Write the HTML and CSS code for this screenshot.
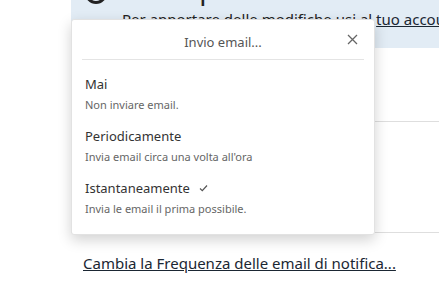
FILE: index.html
```html
<!DOCTYPE html>
<html lang="it">
<head>
  <meta charset="UTF-8" />
  <title>Sottoscrizioni</title>
  <link rel="stylesheet" href="styles.css">
</head>
<body>

  <div class="page">
    <div class="notice">
      <h2 class="notice-title"><span class="notice-icon"></span>Le tue preferenze email</h2>
      <p class="notice-text">Per apportare delle modifiche usi al <a href="#">tuo account</a></p>
    </div>

    <div class="row"></div>
    <div class="row tall"></div>

    <a class="freq-link" href="#">Cambia la Frequenza delle email di notifica...</a>

    <div class="popup">
      <div class="popup-header">
        <span>Invio email...</span>
        <button class="popup-close">
          <svg width="11" height="11" viewBox="0 0 11 11"><path d="M1 1 L10 10 M10 1 L1 10" stroke="#666" stroke-width="1.3" fill="none"/></svg>
        </button>
      </div>
      <ul class="options">
        <li>
          <div class="opt-title">Mai</div>
          <div class="opt-desc">Non inviare email.</div>
        </li>
        <li>
          <div class="opt-title">Periodicamente</div>
          <div class="opt-desc">Invia email circa una volta all'ora</div>
        </li>
        <li class="selected">
          <div class="opt-title">Istantaneamente
            <svg class="check" width="9" height="8" viewBox="0 0 9 8"><path d="M1 4.5 L3.3 6.6 L8 1.5" stroke="#555" stroke-width="1.2" fill="none"/></svg>
          </div>
          <div class="opt-desc">Invia le email il prima possibile.</div>
        </li>
      </ul>
    </div>
  </div>

</body>
</html>
```

FILE: styles.css
```css
* {
  margin: 0;
  padding: 0;
  box-sizing: border-box;
}

body {
  font-family: 'Noto Sans', 'Open Sans', sans-serif;
  background: white;
  color: #333;
  overflow: hidden;
}

.page {
  position: relative;
  margin-left: 71px;
  height: 283px;
}

.notice {
  background-color: #e2ecf5;
  height: 48px;
  overflow: hidden;
}

/* the big title is scrolled away, only its bottom edge shows */
.notice-title {
  display: flex;
  align-items: flex-start;
  gap: 4px;
  font-size: 28px;
  font-weight: normal;
  color: #222;
  line-height: 28px;
  height: 28px;
  margin-top: -26px;
  padding-left: 14px;
  white-space: nowrap;
}

.notice-icon {
  flex: none;
  width: 22px;
  height: 22px;
  margin-top: 8px;
  border: 3px solid #222;
  border-radius: 50%;
}

.notice-text {
  font-size: 15px;
  padding-left: 51px;
  line-height: 20px;
  margin-top: 7px;
  color: #222;
  white-space: nowrap;
}

.notice-text a {
  color: #1b2733;
}

.row {
  height: 74px;
  border-bottom: 1px solid #dedede;
}

.row.tall {
  height: 111px;
}

.freq-link {
  display: inline-block;
  margin-top: 20px;
  margin-left: 12px;
  font-size: 15px;
  color: #1b2733;
}

.popup {
  position: absolute;
  left: 0;
  top: 19px;
  width: 304px;
  height: 216px;
  background: white;
  border: 1px solid #e2e2e2;
  border-radius: 3px;
  box-shadow: 0 5px 14px rgba(0, 0, 0, 0.18);
  padding: 0 10px;
}

.popup-header {
  position: relative;
  height: 40px;
  display: flex;
  align-items: center;
  justify-content: center;
  border-bottom: 1px solid #e4e4e4;
  font-size: 13px;
  color: #555;
  padding-top: 4px;
}

.popup-close {
  position: absolute;
  right: 6px;
  top: 14px;
  background: none;
  border: none;
  display: flex;
}

.options {
  list-style: none;
  padding-top: 14px;
  padding-left: 3px;
}

.options li {
  height: 52px;
}

.opt-title {
  font-size: 13px;
  color: #333;
  line-height: 20px;
  display: flex;
  align-items: center;
  gap: 9px;
}

.opt-desc {
  font-size: 11px;
  color: #666;
  line-height: 18px;
  margin-top: 2px;
}
```
